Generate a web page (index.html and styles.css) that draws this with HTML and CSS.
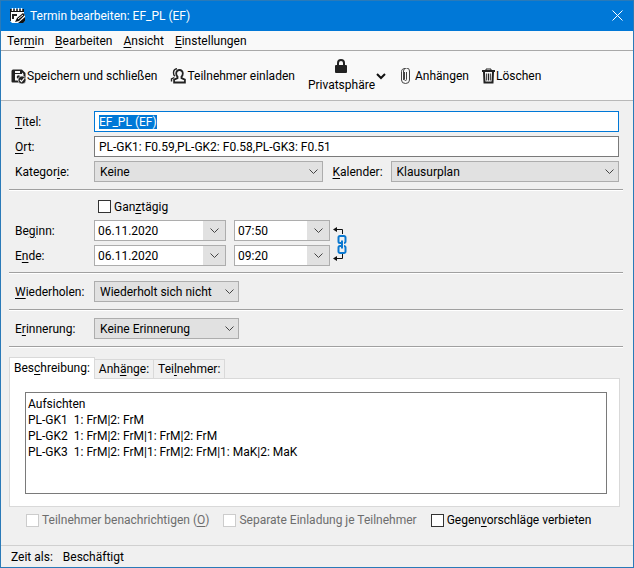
FILE: index.html
```html
<!DOCTYPE html>
<html lang="de">
<head>
    <meta charset="UTF-8">
    <meta name="viewport" content="width=device-width, initial-scale=1.0">
    <title>Termin bearbeiten: EF_PL (EF)</title>
    <link rel="stylesheet" href="styles.css">
</head>
<body>
    <header class="titlebar">
        <svg class="app-icon" width="16" height="16" viewBox="0 0 16 16">
            <path d="M0 2h14v4l1 1v6l-3 2H2l-2-2z" fill="#fff"/>
            <path d="M0 1h14v3H0z" fill="#111"/>
            <path d="M2.500 0v3M5.500 0v3M8.500 0v3M11.500 0v3" stroke="#fff" stroke-width="1.500"/>
            <path d="M0 4h1v9H0zM2 6h5v2H2zM2 6h2v5H2z" fill="#222"/>
            <path d="M5 14l2-4 6-5 2 2-6 6z" fill="#111"/>
            <path d="M8 11l5-4" stroke="#fff"/>
            <path d="M8 15l7-6v4l-2 2z" fill="#111"/>
        </svg>
        <span class="titlebar-text">Termin bearbeiten: EF_PL (EF)</span>
        <button class="close" type="button" aria-label="Schließen">
            <svg width="11" height="11" viewBox="0 0 11 11"><path d="M.5.5l10 10M10.5.5l-10 10" stroke="#fff" fill="none"/></svg>
        </button>
    </header>

    <nav class="menubar">
        <a href="#">Ter<u>m</u>in</a>
        <a href="#"><u>B</u>earbeiten</a>
        <a href="#"><u>A</u>nsicht</a>
        <a href="#"><u>E</u>instellungen</a>
    </nav>

    <div class="toolbar">
        <button type="button">
            <svg width="15" height="15" viewBox="0 0 15 15">
                <path d="M1.500 1.500h9l3 3V9M1.500 1.500v11H8" fill="none" stroke="#222" stroke-width="2" stroke-linejoin="round"/>
                <path d="M1 1h10v4H4v8H1z" fill="#222"/>
                <path d="M4 2h5v2H4z" fill="#f9f9f9"/>
                <circle cx="7.500" cy="8" r="1.800" fill="#222"/>
                <circle cx="11" cy="11" r="4" fill="#222" stroke="#f9f9f9" stroke-width=".6"/>
                <path d="M9 11l1.500 1.600 2.800-3.400" fill="none" stroke="#f9f9f9" stroke-width="1.200"/>
            </svg>
            Speichern und schließen
        </button>
        <button type="button">
            <svg width="16" height="16" viewBox="0 0 16 16" fill="none" stroke="#222">
                <path d="M9.500 2a3.300 3.300 0 0 1 3.300 3.400c0 1.500-.6 2.600-1.300 3.300v1.400l3.400 1.500V14.500H4.100v-2.900l3.400-1.500V8.700C6.800 8 6.200 6.900 6.200 5.400A3.300 3.300 0 0 1 9.500 2z" stroke-width="1.800"/>
                <path d="M7 .7C4.600 1 3.500 2.600 3.500 4.700c0 1.600.5 2.700 1.200 3.500M4.300 9.500L1.500 11v2.500" stroke-width="1.400"/>
            </svg>
            Teilnehmer einladen
        </button>
        <button class="stacked" type="button">
            <span class="stacked-label">
                <svg width="12" height="14" viewBox="0 0 12 14">
                    <path d="M3 7V4a3 3 0 0 1 6 0v3" fill="none" stroke="#222" stroke-width="2"/>
                    <rect x="0" y="6" width="12" height="8" rx="1" fill="#222"/>
                </svg>
                Privatsphäre
            </span>
            <svg width="10" height="7" viewBox="0 0 10 7"><path d="M1 1l4 4 4-4" fill="none" stroke="#111" stroke-width="2"/></svg>
        </button>
        <button type="button" class="attach">
            <svg width="9" height="16" viewBox="0 0 9 16"><path d="M5.500 4v7.500a1 1 0 0 1-2 0V4M2.500 12V3a2.500 2.500 0 0 1 6 0v9a4 3.500 0 0 1-8 0V3.500C.5 1.500 2 .5 4 .5" fill="none" stroke="#444"/></svg>
            Anhängen
        </button>
        <button type="button">
            <svg width="13" height="16" viewBox="0 0 13 16" fill="none" stroke="#222">
                <path d="M0 3h13" stroke-width="2"/>
                <path d="M4 2.500V1h5v1.500"/>
                <path d="M2 4l.5 10.500h8L11 4" stroke-width="2"/>
                <path d="M4.700 5.500v7M6.500 5.500v7M8.300 5.500v7"/>
            </svg>
            Löschen
        </button>
    </div>

    <form class="form">
        <section class="group">
            <div class="row">
                <label for="title"><u>T</u>itel:</label>
                <input class="field" id="title" type="text" value="EF_PL (EF)">
            </div>
            <div class="row">
                <label for="place"><u>O</u>rt:</label>
                <input class="field" id="place" type="text" value="PL-GK1: F0.59,PL-GK2: F0.58,PL-GK3: F0.51">
            </div>
            <div class="row row-double">
                <label for="category">Kategor<u>i</u>e:</label>
                <select id="category"><option>Keine</option></select>
                <label class="second" for="calendar"><u>K</u>alender:</label>
                <select id="calendar"><option>Klausurplan</option></select>
            </div>
        </section>

        <section class="group dates">
            <label class="check allday"><input type="checkbox"><span>Gan<u>z</u>tägig</span></label>
            <label for="start">Be<u>g</u>inn:</label>
            <div class="combo">
                <input id="start" type="text" value="06.11.2020">
                <button type="button" aria-label="Datum wählen"></button>
            </div>
            <div class="combo">
                <input type="text" value="07:50" aria-label="Beginn Uhrzeit">
                <button type="button" aria-label="Uhrzeit wählen"></button>
            </div>
            <svg class="link" width="15" height="37" viewBox="0 0 15 37" fill="none">
                <path d="M2 4.500h7.500V9M2 33.500h7.500V29" stroke="#111"/>
                <path d="M0 4.500L4 2v5zM0 33.500L4 31v5z" fill="#111"/>
                <path d="M8 18H7a1.500 1.500 0 0 1-1.500-1.500v-4A1.500 1.500 0 0 1 7 11h4a1.500 1.500 0 0 1 1.500 1.500v4A1.500 1.500 0 0 1 11 18M8 21H7a1.500 1.500 0 0 0-1.500 1.500v4A1.500 1.500 0 0 0 7 28h4a1.500 1.500 0 0 0 1.500-1.500v-4A1.500 1.500 0 0 0 11 21M9 15.500v8" stroke="#0a78d0" stroke-width="2"/>
            </svg>
            <label for="end">E<u>n</u>de:</label>
            <div class="combo">
                <input id="end" type="text" value="06.11.2020">
                <button type="button" aria-label="Datum wählen"></button>
            </div>
            <div class="combo">
                <input type="text" value="09:20" aria-label="Ende Uhrzeit">
                <button type="button" aria-label="Uhrzeit wählen"></button>
            </div>
        </section>

        <section class="group">
            <div class="row">
                <label for="repeat"><u>W</u>iederholen:</label>
                <select class="short" id="repeat"><option>Wiederholt sich nicht</option></select>
            </div>
        </section>

        <section class="group">
            <div class="row">
                <label for="reminder">E<u>r</u>innerung:</label>
                <select class="short" id="reminder"><option>Keine Erinnerung</option></select>
            </div>
        </section>

        <div class="tabs" role="tablist">
            <button class="tab active" type="button" role="tab" aria-selected="true">Bes<u>c</u>hreibung:</button>
            <button class="tab" type="button" role="tab">Anh<u>ä</u>nge:</button>
            <button class="tab" type="button" role="tab">Tei<u>l</u>nehmer:</button>
        </div>
        <div class="panel">
            <textarea aria-label="Beschreibung">Aufsichten
PL-GK1  1: FrM|2: FrM
PL-GK2  1: FrM|2: FrM|1: FrM|2: FrM
PL-GK3  1: FrM|2: FrM|1: FrM|2: FrM|1: MaK|2: MaK</textarea>
        </div>
        <div class="options">
            <label class="check disabled"><input type="checkbox" disabled><span>Teilnehmer benachrichtigen (<u>O</u>)</span></label>
            <label class="check disabled"><input type="checkbox" disabled><span>Separate Einladung je Teilnehmer</span></label>
            <label class="check"><input type="checkbox"><span>Gegen<u>v</u>orschläge verbieten</span></label>
        </div>
    </form>

    <footer class="statusbar">
        <span>Zeit als:</span>
        <span>Beschäftigt</span>
    </footer>

    <script>
        window.onload = function() {
            var title = document.getElementById('title');
            title.focus();
            title.select();
        };
    </script>
</body>
</html>
```
FILE: styles.css
```css
* {
    box-sizing: border-box;
}
body {
    display: flex;
    flex-direction: column;
    min-height: 100vh;
    margin: 0;
    border: 1px solid #2a7ab8;
    background: #f0f0f0;
    color: #000;
    font-family: "Segoe UI", Roboto, sans-serif;
    font-size: 12px;
    line-height: 16px;
}
button, input, select, textarea {
    margin: 0;
    font: inherit;
    color: inherit;
    border-radius: 0;
    outline: none;
}
button {
    padding: 0;
    border: none;
    background: none;
}
svg {
    flex: none;
}
u {
    text-underline-offset: 2px;
}
::selection {
    background: #0078d7;
    color: #fff;
}

.titlebar {
    display: flex;
    align-items: center;
    height: 31px;
    margin: -1px -1px 0;
    padding: 0 11px 0 10px;
    background: #0078d7;
    color: #fff;
}
.titlebar-text {
    flex: 1;
    margin-left: 4px;
}
.close {
    display: flex;
}

.menubar {
    display: flex;
    gap: 11px;
    height: 20px;
    padding: 2px 6px;
    border-bottom: 1px solid #a9a9a9;
    background: #f9f9f9;
}
.menubar a {
    color: #000;
    text-decoration: none;
}

.toolbar {
    display: flex;
    align-items: center;
    gap: 13px;
    height: 50px;
    padding: 1px 10px 0;
    border-bottom: 1px solid #b8b8b8;
    background: #f9f9f9;
    white-space: nowrap;
}
.toolbar button {
    display: flex;
    align-items: center;
    gap: 1px;
}
.toolbar .attach {
    margin-left: 2px;
    gap: 5px;
}
.stacked-label {
    display: flex;
    flex-direction: column;
    align-items: center;
    gap: 4px;
}

.form {
    display: flex;
    flex-direction: column;
    flex: 1;
    padding: 0 10px 0 8px;
}
.group {
    padding: 8px 4px 7px 6px;
    border-bottom: 1px solid #a0a0a0;
    box-shadow: 0 1px #fff;
}
.group:first-child {
    padding-top: 10px;
}
.row {
    display: grid;
    grid-template-columns: 79px 1fr;
    align-items: center;
    height: 21px;
}
.row + .row {
    margin-top: 4px;
}
.row-double {
    grid-template-columns: 79px 1fr 68px 1fr;
}
.second {
    padding-left: 10px;
}
.field {
    width: 100%;
    height: 21px;
    padding: 0 4px;
    border: 1px solid #7a7a7a;
    background: #fff;
}
.field:focus {
    border-color: #0078d7;
}
select {
    appearance: none;
    width: 100%;
    height: 21px;
    padding: 0 22px 0 5px;
    border: 1px solid #adadad;
    background: #e1e1e1 url("data:image/svg+xml,%3Csvg xmlns='http://www.w3.org/2000/svg' width='9' height='6'%3E%3Cpath d='M.5.5l4 4 4-4' fill='none' stroke='%23444'/%3E%3C/svg%3E") no-repeat right 4px center;
}
select.short {
    width: 145px;
}

.dates {
    display: grid;
    grid-template-columns: 79px 132px 8px 96px auto;
    grid-auto-rows: 21px;
    row-gap: 4px;
    align-items: center;
    justify-content: start;
    padding-top: 5px;
    padding-bottom: 6px;
}
.allday {
    grid-column: 2 / -1;
    padding: 2px 0 0 4px;
}
.combo {
    display: flex;
    grid-column: 2;
    height: 21px;
    border: 1px solid #adadad;
    background: #fff;
}
.combo + .combo {
    grid-column: 4;
}
.combo input {
    flex: 1;
    min-width: 0;
    padding: 0 3px;
    border: none;
    background: none;
}
.combo button {
    width: 22px;
    background: #e1e1e1 url("data:image/svg+xml,%3Csvg xmlns='http://www.w3.org/2000/svg' width='9' height='6'%3E%3Cpath d='M.5.5l4 4 4-4' fill='none' stroke='%23444'/%3E%3C/svg%3E") no-repeat center;
}
.link {
    grid-column: 5;
    grid-row: 2 / 4;
    margin-left: 3px;
}

.check {
    display: flex;
    align-items: center;
}
.check input {
    appearance: none;
    flex: none;
    width: 13px;
    height: 13px;
    margin-right: 3px;
    border: 1px solid #333;
    background: #fff;
}
.disabled {
    color: #6d6d6d;
}
.disabled input {
    border-color: #ccc;
}

.tabs {
    display: flex;
    align-items: flex-end;
    margin-top: 10px;
}
.tab {
    height: 19px;
    padding: 0 4px;
    border: 1px solid #d9d9d9;
    border-left: none;
    border-bottom: none;
}
.tab.active {
    height: 22px;
    margin-bottom: -1px;
    padding-bottom: 2px;
    border-left: 1px solid #d9d9d9;
    background: #fff;
    z-index: 1;
}
.panel {
    display: flex;
    flex: 1;
    margin-right: 3px;
    padding: 13px 12px 12px 15px;
    border: 1px solid #d9d9d9;
    background: #fff;
}
textarea {
    flex: 1;
    padding: 3px 2px;
    border: 1px solid #7a7a7a;
    background: #fff;
    resize: none;
}
.options {
    display: flex;
    gap: 14px;
    padding: 5px 0 17px 17px;
    white-space: nowrap;
}

.statusbar {
    display: flex;
    gap: 10px;
    padding: 3px 10px 2px;
    border-top: 1px solid #d0d0d0;
}
```
